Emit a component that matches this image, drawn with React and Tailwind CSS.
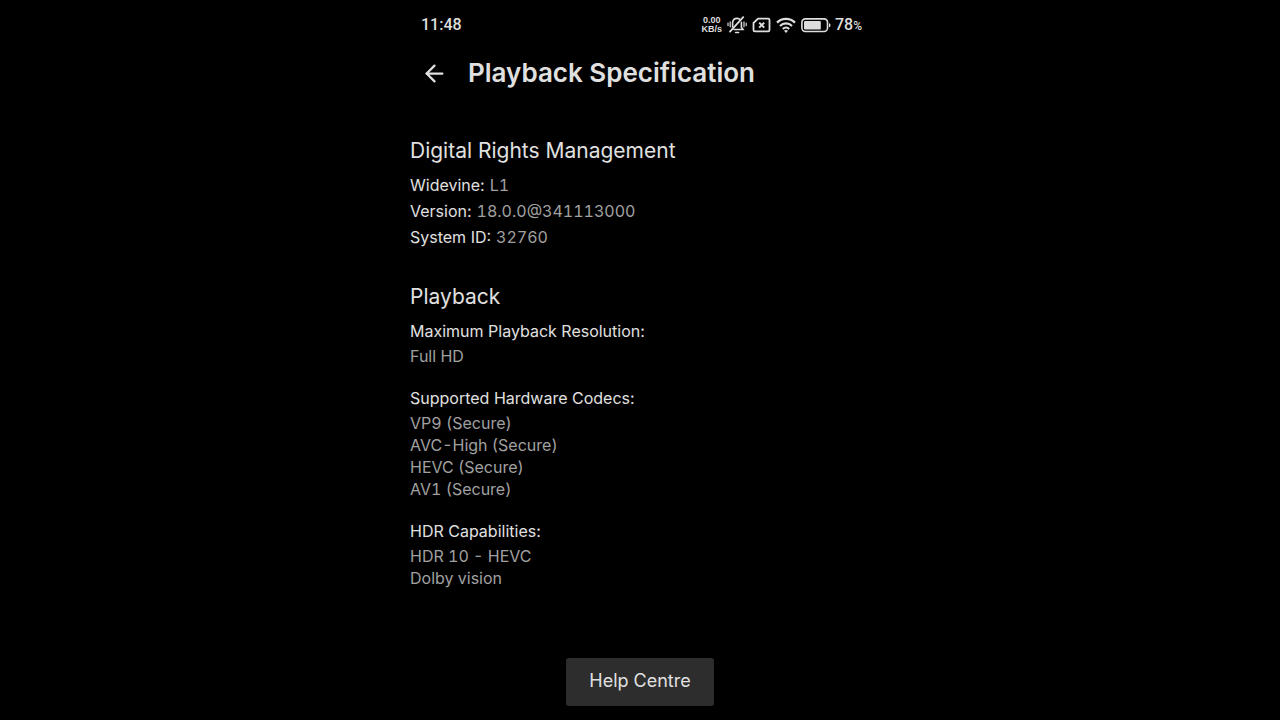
import { ArrowLeft } from "lucide-react";

const drm = [
  { label: "Widevine:", value: "L1" },
  { label: "Version:", value: "18.0.0@341113000" },
  { label: "System ID:", value: "32760" },
];

const playback = [
  { label: "Maximum Playback Resolution:", values: ["Full HD"] },
  {
    label: "Supported Hardware Codecs:",
    values: ["VP9 (Secure)", "AVC-High (Secure)", "HEVC (Secure)", "AV1 (Secure)"],
  },
  { label: "HDR Capabilities:", values: ["HDR 10 - HEVC", "Dolby vision"] },
];

function SilentIcon() {
  return (
    <svg width="20" height="18" viewBox="0 0 20 18" fill="none" stroke="currentColor" strokeWidth="1.6" strokeLinecap="round" aria-hidden="true">
      <path d="M5.6 11V7.2C5.6 4.2 7.4 2.4 10 2.4c1 0 1.9.3 2.6.8" />
      <path d="M14.4 6.4v4.8l1.6 2.3H7" />
      <path d="M8.6 16.5h3" />
      <path d="M16.2 1.2L3 15.6" strokeWidth="1.8" />
      <path d="M3.2 5.8v5M1 7.2v2.4M17 5.8v5M19.2 7.2v2.4" strokeWidth="1.2" />
    </svg>
  );
}

function NoSimIcon() {
  return (
    <svg width="19" height="16" viewBox="0 0 19 16" fill="none" stroke="currentColor" strokeWidth="1.8" strokeLinejoin="round" aria-hidden="true">
      <path d="M6 1.6h10.2c.8 0 1.3.5 1.3 1.3v10.2c0 .8-.5 1.3-1.3 1.3H2.8c-.8 0-1.3-.5-1.3-1.3V6z" />
      <path d="M7.2 5.6l5 5M12.2 5.6l-5 5" strokeWidth="2" />
    </svg>
  );
}

function WifiIcon() {
  return (
    <svg width="20" height="16" viewBox="0 0 20 16" fill="none" stroke="currentColor" strokeWidth="2.2" aria-hidden="true">
      <path d="M1 5.6a12.8 12.8 0 0 1 18 0" />
      <path d="M4 8.9a8.4 8.4 0 0 1 12 0" />
      <path d="M6.8 12a4.6 4.6 0 0 1 6.4 0" />
      <path d="M10 16l-2-2.3a3.2 3.2 0 0 1 4 0z" fill="currentColor" stroke="none" />
    </svg>
  );
}

function BatteryIcon() {
  return (
    <svg width="30" height="15" viewBox="0 0 30 15" aria-hidden="true">
      <rect x="0.9" y="0.9" width="25.6" height="12.6" rx="3.4" fill="none" stroke="currentColor" strokeWidth="1.6" />
      <rect x="3" y="3" width="16.8" height="8.4" rx="1" fill="currentColor" />
      <path d="M28 5.2c1 .3 1.5 1 1.5 2s-.5 1.7-1.5 2z" fill="currentColor" />
    </svg>
  );
}

function StatusBar() {
  return (
    <div className="flex h-[50px] items-center justify-between pl-[21px] pr-[18px] text-[#dedede]">
      <span className="font-['Roboto',sans-serif] text-[16px] font-medium">11:48</span>
      <div className="flex items-center gap-[5px]">
        <div className="text-center font-['Liberation_Sans',sans-serif] text-[9px] font-bold leading-[9px]">
          <div>0.00</div>
          <div>KB/s</div>
        </div>
        <SilentIcon />
        <NoSimIcon />
        <WifiIcon />
        <div className="flex items-center gap-1">
          <BatteryIcon />
          <span className="font-['Roboto',sans-serif] text-[16px] font-medium">
            78<span className="text-[12px]">%</span>
          </span>
        </div>
      </div>
    </div>
  );
}

export default function App() {
  return (
    <div className="min-h-screen bg-black font-['Inter',sans-serif] text-[#e0e0e0]">
      <div className="mx-auto max-w-[480px]">
        <StatusBar />

        <header className="flex h-[46px] items-center gap-5 pl-[21px]">
          <button type="button" aria-label="Back">
            <ArrowLeft className="h-[27px] w-[27px]" />
          </button>
          <h1 className="text-[26px] font-semibold leading-8">Playback Specification</h1>
        </header>

        <main className="px-[10px] pt-[41px]">
          <section>
            <h2 className="text-[21px] leading-7">Digital Rights Management</h2>
            <dl className="mt-[9px] flex flex-col gap-1 text-[16px] leading-[22px]">
              {drm.map(({ label, value }) => (
                <div key={label} className="flex gap-[5px]">
                  <dt>{label}</dt>
                  <dd className="tabular-nums text-[#a0a0a0]">{value}</dd>
                </div>
              ))}
            </dl>
          </section>

          <section className="mt-[35px]">
            <h2 className="text-[21px] leading-7">Playback</h2>
            <dl className="mt-[9px] flex flex-col gap-5 text-[16px] leading-[22px]">
              {playback.map(({ label, values }) => (
                <div key={label}>
                  <dt className="mb-[3px]">{label}</dt>
                  {values.map((value) => (
                    <dd key={value} className="tabular-nums text-[#a0a0a0]">{value}</dd>
                  ))}
                </div>
              ))}
            </dl>
          </section>
        </main>

        <div className="flex justify-center pb-3 pt-[69px]">
          <button type="button" className="h-12 rounded-[3px] bg-[#2d2d2d] px-[23px] pb-[3px] text-[18px]">
            Help Centre
          </button>
        </div>
      </div>
    </div>
  );
}
